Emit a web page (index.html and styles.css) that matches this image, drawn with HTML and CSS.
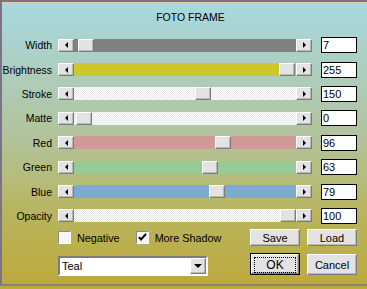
FILE: index.html
```html
<!DOCTYPE html>
<html>
  <head>
    <title>Foto Frame</title>
    <link rel="stylesheet" href="styles.css">
  </head>
  <body>
    <div class="dialog">
      <div class="title">FOTO FRAME</div>

      <div class="sliders">
        <div class="row">
          <span class="label">Width</span>
          <div class="scroll">
            <span class="btn3d arrow"><i class="tri-left"></i></span>
            <div class="track track-gray"><span class="btn3d thumb" style="left: 4px"></span></div>
            <span class="btn3d arrow"><i class="tri-right"></i></span>
          </div>
          <div class="value">7</div>
        </div>
        <div class="row">
          <span class="label">Brightness</span>
          <div class="scroll">
            <span class="btn3d arrow"><i class="tri-left"></i></span>
            <div class="track track-yellow"><span class="btn3d thumb" style="left: 205px"></span></div>
            <span class="btn3d arrow"><i class="tri-right"></i></span>
          </div>
          <div class="value">255</div>
        </div>
        <div class="row">
          <span class="label">Stroke</span>
          <div class="scroll">
            <span class="btn3d arrow"><i class="tri-left"></i></span>
            <div class="track track-dither"><span class="btn3d thumb" style="left: 121px"></span></div>
            <span class="btn3d arrow"><i class="tri-right"></i></span>
          </div>
          <div class="value">150</div>
        </div>
        <div class="row">
          <span class="label">Matte</span>
          <div class="scroll">
            <span class="btn3d arrow"><i class="tri-left"></i></span>
            <div class="track track-dither"><span class="btn3d thumb" style="left: 2px"></span></div>
            <span class="btn3d arrow"><i class="tri-right"></i></span>
          </div>
          <div class="value">0</div>
        </div>
        <div class="row">
          <span class="label">Red</span>
          <div class="scroll">
            <span class="btn3d arrow"><i class="tri-left"></i></span>
            <div class="track track-red"><span class="btn3d thumb" style="left: 141px"></span></div>
            <span class="btn3d arrow"><i class="tri-right"></i></span>
          </div>
          <div class="value">96</div>
        </div>
        <div class="row">
          <span class="label">Green</span>
          <div class="scroll">
            <span class="btn3d arrow"><i class="tri-left"></i></span>
            <div class="track track-green"><span class="btn3d thumb" style="left: 128px"></span></div>
            <span class="btn3d arrow"><i class="tri-right"></i></span>
          </div>
          <div class="value">63</div>
        </div>
        <div class="row">
          <span class="label">Blue</span>
          <div class="scroll">
            <span class="btn3d arrow"><i class="tri-left"></i></span>
            <div class="track track-blue"><span class="btn3d thumb" style="left: 135px"></span></div>
            <span class="btn3d arrow"><i class="tri-right"></i></span>
          </div>
          <div class="value">79</div>
        </div>
        <div class="row">
          <span class="label">Opacity</span>
          <div class="scroll">
            <span class="btn3d arrow"><i class="tri-left"></i></span>
            <div class="track track-dither"><span class="btn3d thumb" style="left: 206px"></span></div>
            <span class="btn3d arrow"><i class="tri-right"></i></span>
          </div>
          <div class="value">100</div>
        </div>
      </div>

      <div class="controls">
        <div class="checks">
          <label class="check"><span class="box"></span>Negative</label>
          <label class="check">
            <span class="box">
              <svg width="9" height="9" viewBox="0 0 9 9"><path d="M1 4 L3 6.5 L8 1" fill="none" stroke="#000" stroke-width="2"/></svg>
            </span>More Shadow
          </label>
        </div>
        <button class="btn3d push">Save</button>
        <button class="btn3d push">Load</button>

        <div class="combo">
          <span class="combo-text">Teal</span>
          <span class="btn3d combo-btn"><i class="tri-down"></i></span>
        </div>
        <div class="default-wrap">
          <button class="btn3d push ok"><span class="focus">OK</span></button>
        </div>
        <button class="btn3d push cancel">Cancel</button>
      </div>
    </div>
  </body>
</html>
```

FILE: styles.css
```css
html {
  height: 100%;
  background: linear-gradient(#a7d9e3 0%, #b2c39a 48%, #b8b45c 75%, #bda93a 100%);
}
body {
  margin: 0;
  font-family: "Liberation Sans", Arial, sans-serif;
  font-size: 11px;
  color: #000;
}

.dialog {
  width: 365px;
  height: 282px;
  border-top: 2px solid #7b7387;
  border-left: 2px solid #7b7387;
  border-bottom: 2px solid #8a8478;
  box-shadow: 0 1px 0 #d8d2a0 inset;
}

.title {
  height: 31px;
  line-height: 31px;
  text-align: center;
  padding-left: 12px;
  font-size: 10.5px;
}

/* slider rows */
.sliders {
  display: flex;
  flex-direction: column;
}
.row {
  display: flex;
  align-items: center;
  height: 24.4px;
}
.label {
  width: 50px;
  text-align: right;
  font-size: 10.5px;
  margin-right: 6px;
}
.scroll {
  display: flex;
  width: 254px;
  height: 13px;
  margin-right: 9px;
}
.track {
  position: relative;
  flex: 1;
}
.track-gray { background: #808080; }
.track-yellow { background: #cbc72d; }
.track-red { background: #d09a99; }
.track-green { background: #98ca98; }
.track-blue { background: #80a9cf; }
.track-dither {
  background-color: #ffffff;
  background-image: repeating-conic-gradient(#e6e6e6 0 25%, #ffffff 0 50%);
  background-size: 2px 2px;
}

.btn3d {
  box-sizing: border-box;
  background: #e3e3e3;
  border: 1px solid;
  border-color: #ffffff #7c7c7c #7c7c7c #ffffff;
  box-shadow: inset -1px -1px 0 #b9b9b9;
}
.arrow {
  width: 16px;
  height: 13px;
  display: flex;
  align-items: center;
  justify-content: center;
}
.thumb {
  position: absolute;
  top: 0;
  width: 16px;
  height: 13px;
}
.tri-left,
.tri-right,
.tri-down {
  width: 0;
  height: 0;
  border: 3px solid transparent;
}
.tri-left {
  border-right: 3px solid #000;
  border-left-width: 0;
}
.tri-right {
  border-left: 3px solid #000;
  border-right-width: 0;
}
.tri-down {
  border-top: 4px solid #000;
  border-bottom-width: 0;
  border-left-width: 4px;
  border-right-width: 4px;
}

.value {
  box-sizing: border-box;
  width: 36px;
  height: 16px;
  background: #fff;
  border: 1px solid #000;
  padding-left: 1px;
  line-height: 14px;
  font-size: 11px;
}

/* bottom controls */
.controls {
  display: grid;
  grid-template-columns: 185px 50px 50px;
  grid-template-rows: 17px 22px;
  column-gap: 7px;
  row-gap: 7px;
  padding-left: 56px;
  margin-top: 1px;
}
.checks {
  display: flex;
  align-items: center;
  gap: 16px;
  font-size: 10.8px;
}
.check {
  display: flex;
  align-items: center;
}
.box {
  box-sizing: border-box;
  width: 13px;
  height: 13px;
  margin-right: 6px;
  background: #f6f6f6;
  border: 1px solid;
  border-color: #8c8c8c #ffffff #ffffff #8c8c8c;
  display: flex;
  align-items: center;
  justify-content: center;
}

.push {
  font-family: "Liberation Sans", Arial, sans-serif;
  font-size: 11px;
  padding: 0;
  width: 50px;
  height: 17px;
  color: #000;
}

.combo {
  box-sizing: border-box;
  width: 150px;
  height: 20px;
  margin-top: 3px;
  background: #fff;
  border: 2px solid;
  border-color: #7c7c7c #ffffff #ffffff #7c7c7c;
  display: flex;
  align-items: center;
  padding-left: 2px;
}
.combo-text {
  flex: 1;
}
.combo-btn {
  width: 16px;
  height: 16px;
  display: flex;
  align-items: center;
  justify-content: center;
}

.default-wrap {
  box-sizing: border-box;
  width: 50px;
  height: 22px;
  border: 1px solid #000;
}
.ok {
  width: 48px;
  height: 20px;
  font-size: 12px;
}
.focus {
  display: flex;
  align-items: center;
  justify-content: center;
  margin: 2px;
  height: 14px;
  border: 1px dotted #000;
}
.cancel {
  height: 21px;
  margin-top: 1px;
}
```
